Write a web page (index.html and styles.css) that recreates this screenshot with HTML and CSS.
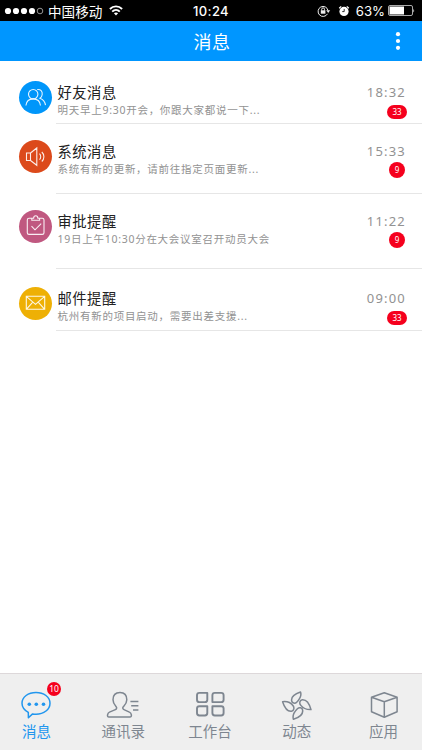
FILE: index.html
```html
<!DOCTYPE html>
<html lang="zh-CN">
<head>
<meta charset="utf-8">
<title>消息</title>
<link rel="stylesheet" href="styles.css">
</head>
<body>
<div class="status">
  <div class="status-left">
    <svg class="signal" width="40" height="8" viewBox="0 0 40 8" fill="#fff"><circle cx="4" cy="4" r="3.1"/><circle cx="12" cy="4" r="3.1"/><circle cx="20" cy="4" r="3.1"/><circle cx="28" cy="4" r="3.1"/><circle cx="36" cy="4" r="2.8" fill="none" stroke="#bbb" stroke-width=".8"/></svg>
    <span class="carrier">中国移动</span>
    <svg class="wifi" width="14" height="11" viewBox="0 0 14 11" fill="none" stroke="#fff" stroke-width="1.9"><path d="M.9 4C4.4.5 9.6.5 13.1 4M3.2 6.6c2.2-2.1 5.4-2.1 7.6 0"/><path d="M4.9 8.3c1.2-1.1 3-1.1 4.2 0L7 10.5z" fill="#fff" stroke="none"/></svg>
  </div>
  <span class="clock">10:24</span>
  <div class="status-right">
    <svg class="lock" width="14" height="12" viewBox="0 0 14 12" fill="none" stroke="#eee"><path d="M10.5 8.8A5 5 0 1 1 11 5.5"/><path d="M9.2 5.3h4L11.2 8z" fill="#eee" stroke="none"/><path d="M4.7 5.6V4.3a1.4 1.4 0 0 1 2.8 0v1.3"/><path d="M3.8 5.3h4.6v3.4H3.8z" fill="#eee" stroke="none"/></svg>
    <svg class="alarm" width="12" height="12" viewBox="0 0 12 12"><circle cx="6" cy="6.4" r="4.6" fill="#fff"/><path d="M1.2 3.2L3.2 1.4M10.8 3.2L8.8 1.4" stroke="#fff" stroke-width="1.2"/><path d="M6.2 3.9v2.7H4.2" fill="none" stroke="#000" stroke-width=".8"/></svg>
    <span class="percent">63%</span>
    <svg class="battery" width="27" height="11" viewBox="0 0 27 11"><rect x=".5" y=".5" width="24" height="10" rx="1.5" fill="none" stroke="#aaa"/><rect x="1.5" y="1.5" width="14.5" height="8" fill="#fff"/><path d="M25.3 3.5q1.5 2 0 4z" fill="#ddd"/></svg>
  </div>
</div>
<header class="header">
  <h1>消息</h1>
  <svg class="more" width="6" height="20" viewBox="0 0 6 20" fill="#fff"><circle cx="3" cy="3.2" r="2.1"/><circle cx="3" cy="10" r="2.1"/><circle cx="3" cy="16.8" r="2.1"/></svg>
</header>
<main class="list">
  <article class="row row-friend">
    <div class="avatar blue"><svg width="33" height="33" viewBox="0 0 33 33"><circle cx="14.2" cy="13.2" r="4.7"/><path d="M6.9 24.5c.5-4.2 3.4-6.6 7.3-6.6s6.8 2.4 7.3 6.6M18.2 8.5c3.5-.5 5.4 1.8 5 5-.2 1.9-1 3-2.2 3.7 3.2 1.2 5 3.6 5.5 7"/></svg></div>
    <div class="body"><div class="text"><h2>好友消息</h2><p>明天早上9:30开会，你跟大家都说一下...</p></div>
    <div class="meta"><time>18:32</time><span class="badge wide">33</span></div></div>
  </article>
  <article class="row row-system">
    <div class="avatar orange"><svg width="33" height="33" viewBox="0 0 33 33"><path d="M7.5 13h4v7.5h-4zM11.5 13l6.3-5v17.3l-6.3-4.8M20.5 13.7c1.6 1.5 1.6 4.5 0 6M22.8 12c2.8 2.5 2.8 7 0 9.5"/></svg></div>
    <div class="body"><div class="text"><h2>系统消息</h2><p>系统有新的更新，请前往指定页面更新...</p></div>
    <div class="meta"><time>15:33</time><span class="badge">9</span></div></div>
  </article>
  <article class="row row-approval">
    <div class="avatar pink"><svg width="33" height="33" viewBox="0 0 33 33"><path d="M13 8.2h-3q-1.7 0-1.7 1.7v12.8q0 1.7 1.7 1.7h13.3q1.7 0 1.7-1.7V9.9q0-1.7-1.7-1.7h-3M12.8 10.2V8.3h1.8c.1-3.5 4.2-3.5 4.3 0h1.7v1.9zM12.5 16.2l3.5 3.6 6.2-6.2"/></svg></div>
    <div class="body"><div class="text"><h2>审批提醒</h2><p>19日上午10:30分在大会议室召开动员大会</p></div>
    <div class="meta"><time>11:22</time><span class="badge">9</span></div></div>
  </article>
  <article class="row row-mail">
    <div class="avatar yellow"><svg width="33" height="33" viewBox="0 0 33 33"><path d="M7.3 9.3h18.4v13H7.3zM7.3 9.3l9.2 8 9.2-8M7.3 22.3l6.5-7.2M25.7 22.3l-6.5-7.2"/></svg></div>
    <div class="body"><div class="text"><h2>邮件提醒</h2><p>杭州有新的项目启动，需要出差支援...</p></div>
    <div class="meta"><time>09:00</time><span class="badge wide">33</span></div></div>
  </article>
</main>
<nav class="tabs">
  <div class="tab active"><svg width="34" height="34" viewBox="0 0 34 34"><path d="M9.3 26.4C5.5 24.2 3 20.8 3 17.2 3 11 9.2 6.5 17 6.5s14 4.5 14 10.7-6 11-14 11c-1.2 0-2.3-.1-3.4-.3l-4.2 3.8z"/><g fill="currentColor" stroke="none"><circle cx="10.3" cy="18.3" r="1.8"/><circle cx="17.3" cy="18.3" r="1.8"/><circle cx="24.5" cy="18.3" r="1.8"/></g></svg><span>消息</span><b class="count">10</b></div>
  <div class="tab"><svg width="34" height="34" viewBox="0 0 34 34"><path d="M14 6.5c-4.5 0-7 3-7 7.3 0 3.7 1.7 5.3 3.2 6.9 1 1.3.3 2.6-1.4 3.2l-5.3 2.2c-2 .8-3 4.9-.6 4.9h21c2.5 0 1.6-4.1-.5-4.9l-4.9-2.2c-1.7-.6-2.3-1.9-1.2-3.2 1.5-1.6 3.5-3.2 3.5-6.9 0-4.3-2.3-7.3-6.8-7.3zM24.4 15.5h8M25.2 19.8h7.2M27 24h5.4"/></svg><span>通讯录</span></div>
  <div class="tab"><svg width="34" height="34" viewBox="0 0 34 34"><path class="heavy" d="M6.4 6.9h7.9v6.8q0 2.4-2.4 2.4H6.4Q4 16.1 4 13.7V9.3q0-2.4 2.4-2.4zM21.8 6.9h6.4q2.4 0 2.4 2.4v4.4q0 2.4-2.4 2.4h-8.8V9.3q0-2.4 2.4-2.4zM6.4 20.2h7.9v6.9q0 2.4-2.4 2.4H6.4Q4 29.5 4 27.1v-4.5q0-2.4 2.4-2.4zM19.4 20.2h8.8q2.4 0 2.4 2.4v4.5q0 2.4-2.4 2.4h-6.4q-2.4 0-2.4-2.4z"/></svg><span>工作台</span></div>
  <div class="tab"><svg width="34" height="34" viewBox="0 0 34 34"><path d="M20.5 6c-5.6 1.8-9.6 5-8.8 9 .4 2.3 3.4 2.8 5 1.2C19.8 13.2 21.8 9.8 20.5 6zM31 23.6c-1.5-5.5-4-10.1-8.6-9.9-2.7.1-3.3 3.6-1.8 5.4 2.3 3 6.1 4.7 10.4 4.5zM2.6 15.7c1.7 5.4 4.5 9.9 8.8 9.5 2.6-.2 3.1-3.6 1.7-5.5-2.2-2.9-6.1-4.5-10.5-4zM13.4 33.3c5.8-1.8 9.9-5.2 9.2-9.3-.5-2.4-3.4-2.9-5.2-1.3-3 2.9-5.2 6.6-4 10.6z"/></svg><span>动态</span></div>
  <div class="tab"><svg width="34" height="34" viewBox="0 0 34 34"><path d="M17.3 6.8l12.8 4.5v14.4l-12.8 5.5-12.8-5.5V11.3zM4.5 11.3l12.8 4.4 12.8-4.4M17.3 15.7v15.5"/></svg><span>应用</span></div>
</nav>
</body>
</html>
```
FILE: styles.css
```css
* { box-sizing: border-box; }
body {
  margin: 0;
  width: 422px;
  height: 750px;
  display: flex;
  flex-direction: column;
  overflow: hidden;
  background: #fff;
  font-family: "Noto Sans", "Noto Sans CJK SC", sans-serif;
}
svg { display: block; flex: none; }
h1, h2, p { margin: 0; font-weight: 400; white-space: nowrap; }

.status {
  height: 21px;
  flex: none;
  display: grid;
  grid-template-columns: 1fr auto 1fr;
  align-items: center;
  background: #000;
  color: #fff;
  line-height: 20px;
}
.status-left, .status-right { display: flex; align-items: center; }
.status-left { padding-left: 4px; }
.status-right { justify-content: flex-end; padding-right: 7px; }
.carrier { margin-left: 4px; font-size: 13.6px; font-family: "Noto Sans CJK SC", sans-serif; }
.wifi { margin-left: 7px; }
.clock { font: 500 13px/20px Inter, sans-serif; letter-spacing: .4px; padding-top: 1px; }
.alarm { margin-left: 7px; }
.percent { font: 13.2px/20px Inter, sans-serif; margin-left: 6px; padding-top: 1px; }
.battery { margin-left: 3px; }

.header {
  height: 40px;
  flex: none;
  display: grid;
  grid-template-columns: 1fr auto 1fr;
  align-items: center;
  background: #0096ff;
  color: #fff;
}
.header h1 { grid-column: 2; padding: 1px 0 0 2px; font-size: 18px; line-height: 38px; letter-spacing: .4px; }
.more { justify-self: end; margin-right: 21px; }

.list { flex: 1; }
.row { display: flex; padding-left: 19px; }
.row-friend { height: 63px; --top: 20px; }
.row-system { height: 70px; --top: 16px; }
.row-approval { height: 75px; --top: 16px; }
.row-mail { height: 62px; --top: 18px; }
.avatar {
  flex: none;
  width: 33px;
  height: 33px;
  margin: var(--top) 4px 0 0;
  border-radius: 50%;
}
.avatar svg { fill: none; stroke: #fff; stroke-width: 1.1; stroke-opacity: .9; }
.blue { background: #0096fa; }
.orange { background: #dc4a1b; }
.pink { background: #c05880; }
.yellow { background: #eeb005; }
.body {
  flex: 1;
  display: flex;
  justify-content: space-between;
  padding: var(--top) 15px 0 1.5px;
  border-bottom: 1px solid #e6e6e6;
}
.text h2 { font-size: 14.3px; line-height: 20px; letter-spacing: .5px; color: #222; margin-top: 2px; }
.text p { font-size: 10.5px; line-height: 15px; letter-spacing: .73px; color: #929292; }
.meta { display: flex; flex-direction: column; align-items: flex-end; }
.meta time { font-size: 13px; line-height: 20px; letter-spacing: 1.2px; color: #929292; margin: 1px 1px 1px 0; }
.badge {
  width: 16px;
  height: 16px;
  margin: 0 2px 0 0;
  border-radius: 8px;
  background: #f5001d;
  color: #fff;
  font-size: 8px;
  line-height: 16px;
  text-align: center;
}
.badge.wide { width: 20px; height: 14px; margin: 2px 0 0; line-height: 14px; }

.tabs {
  flex: none;
  height: 77px;
  margin: 0 -5px 0 -7px;
  display: grid;
  grid-template-columns: repeat(5, 1fr);
  background: #efefef;
  border-top: 1px solid #ddd8da;
}
.tab {
  position: relative;
  display: flex;
  flex-direction: column;
  align-items: center;
  padding-top: 12px;
  color: #7e8690;
  font-size: 14.5px;
  line-height: 23px;
}
.tab svg { fill: none; stroke: currentColor; stroke-width: 1.5; stroke-linejoin: round; }
.tab svg .heavy { stroke-width: 1.9; }
.tab.active { color: #2196ee; }
.count {
  position: absolute;
  top: 8px;
  left: 54px;
  width: 14px;
  height: 14px;
  border-radius: 50%;
  background: #f5001d;
  color: #fff;
  font-size: 8.5px;
  font-weight: 400;
  line-height: 14px;
  text-align: center;
}
```
